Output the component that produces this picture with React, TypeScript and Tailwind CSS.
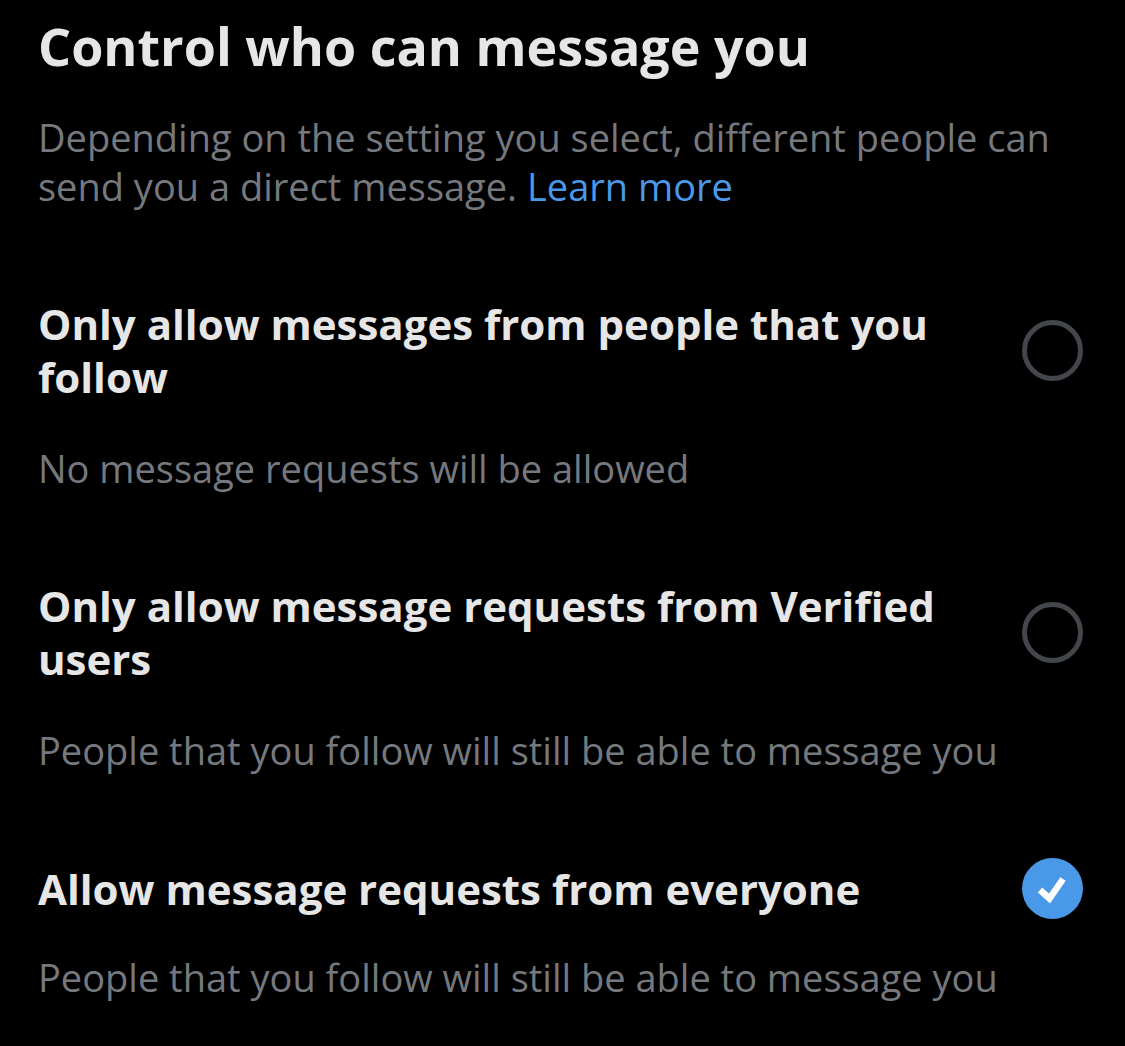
import React from 'react';

interface OptionProps {
    title: string;
    caption: string;
    selected?: boolean;
}

const Radio: React.FC<{ selected?: boolean }> = ({ selected }) => {
    if (selected) {
        return (
            <svg width="61" height="61" viewBox="0 0 61 61" className="shrink-0">
                <circle cx="30.5" cy="30.5" r="30.5" fill="#4a99e9" />
                <path d="M18 32l9.5 8.5L41 21" stroke="#ffffff" strokeWidth="6.5" fill="none" strokeLinejoin="miter" />
            </svg>
        );
    }
    return <div className="w-[61px] h-[61px] shrink-0 rounded-full border-[5px] border-[#43474b]" />;
};

// 選択中の行はタイトルが1行なので余白を少し詰める
const Option: React.FC<OptionProps> = ({ title, caption, selected }) => (
    <div className={selected ? 'pt-[83px]' : 'pt-[86px]'}>
        <div className="flex items-center justify-between gap-[36px]">
            <h2 className="text-[42px] leading-[53px] font-bold text-[#e6e6e6]">{title}</h2>
            <Radio selected={selected} />
        </div>
        <p className={`${selected ? 'mt-[34px]' : 'mt-[41px]'} text-[38px] leading-[49px] text-[#75797e]`}>
            {caption}
        </p>
    </div>
);

export default function App() {
    return (
        <div
            className="w-[1125px] h-[1046px] overflow-hidden bg-black pl-[38px] pr-[42px] pt-[16px]"
            style={{ fontFamily: '"Open Sans", "Noto Sans", sans-serif' }}
        >
            <h1 className="text-[52px] leading-[60px] font-bold text-[#e6e6e6]">Control who can message you</h1>
            <p className="mt-[37px] text-[38px] leading-[49px] text-[#75797e]">
                Depending on the setting you select, different people can send you a direct message.{' '}
                <span className="text-[#4a99e9]">Learn more</span>
            </p>
            <Option
                title="Only allow messages from people that you follow"
                caption="No message requests will be allowed"
            />
            <Option
                title="Only allow message requests from Verified users"
                caption="People that you follow will still be able to message you"
            />
            <Option
                title="Allow message requests from everyone"
                caption="People that you follow will still be able to message you"
                selected
            />
        </div>
    );
}
